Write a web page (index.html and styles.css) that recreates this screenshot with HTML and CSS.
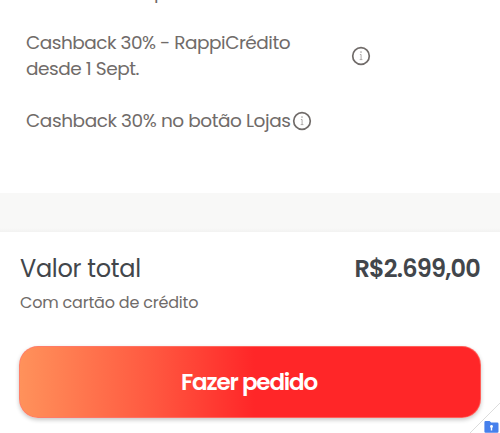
FILE: index.html
```html
<!DOCTYPE html>
<html lang="pt-BR">
<head>
    <meta charset="UTF-8">
    <meta name="viewport" content="width=device-width, initial-scale=1.0">
    <title>Fazer pedido</title>
    <link rel="stylesheet" href="styles.css">
</head>
<body>
<div class="checkout">
    <div class="benefits">
        <div class="benefit benefit-cut"><span>p</span></div>
        <div class="benefit benefit-wide">
            <div class="benefit-text">
                <div class="line-first">Cashback 30% - RappiCrédito</div>
                <div class="line-second">desde 1 Sept.</div>
            </div>
            <svg class="info" viewBox="0 0 20 20">
                <circle cx="10" cy="10" r="8.3" fill="none" stroke="#706b69" stroke-width="1.7"/>
                <path d="M8.9 8.5h1.2v5.2M8.7 13.6h2.7" fill="none" stroke="#a5a1a0" stroke-width="0.9"/>
                <circle cx="10" cy="6.1" r="0.8" fill="#a5a1a0"/>
            </svg>
        </div>
        <div class="benefit">
            <div class="benefit-text line-stores">Cashback 30% no botão Lojas</div>
            <svg class="info" viewBox="0 0 20 20">
                <circle cx="10" cy="10" r="8.3" fill="none" stroke="#706b69" stroke-width="1.7"/>
                <path d="M8.9 8.5h1.2v5.2M8.7 13.6h2.7" fill="none" stroke="#a5a1a0" stroke-width="0.9"/>
                <circle cx="10" cy="6.1" r="0.8" fill="#a5a1a0"/>
            </svg>
        </div>
    </div>

    <div class="divider"></div>

    <div class="summary">
        <div class="total">
            <span class="total-label">Valor total</span>
            <span class="total-value">R$2.699,00</span>
        </div>
        <div class="payment"><span>Com cartão de crédito</span></div>
        <button class="order-button"><span>Fazer pedido</span></button>
    </div>

    <svg class="corner" viewBox="0 0 30 30">
        <path d="M0 30L30 0V30Z" fill="#fff"/>
        <path d="M0 30L30 0" stroke="#dcdcdc" stroke-width="1"/>
        <path d="M15.6 18h4l1.5 1.5h6.2q1.2 0 1.2 1.2v8q0 1.1-1.2 1.1H15.6q-1.2 0-1.2-1.1v-9.5q0-1.2 1.2-1.2Z" fill="#4680ec"/>
        <circle cx="21.5" cy="23.5" r="1.4" fill="#fff"/>
        <path d="M21.5 23.5v4" stroke="#fff" stroke-width="1.4"/>
    </svg>
</div>
</body>
</html>
```
FILE: styles.css
```css
* { box-sizing: border-box; }
body {
    margin: 0;
    background-color: #fff;
    color: #706b69;
    font-family: Poppins, "Open Sans", sans-serif;
}
.checkout { position: relative; height: 433px; overflow: hidden; }

/* Cashback */
.benefits { height: 193px; padding-left: 26px; }
.benefit { display: flex; align-items: center; font-size: 18.5px; line-height: 26px; white-space: nowrap; }
.benefit-cut { height: 30px; align-items: flex-start; padding-left: 128px; line-height: 0; }
.benefit-cut span { margin-top: -8px; }
.benefit-wide { height: 52px; margin-bottom: 26px; }
.benefit-wide .benefit-text { width: 325px; }
.line-first { letter-spacing: -0.49px; }
.line-second { letter-spacing: -0.45px; }
.line-stores { width: 266px; letter-spacing: -0.43px; }
.info { width: 20px; height: 20px; flex: none; }

.divider { height: 39px; background: linear-gradient(#f8f8f7 0, #f8f8f7 35px, #f2f2f1 39px); }

/* Total */
.summary { padding: 20px 19px 0 20px; }
.total { display: flex; justify-content: space-between; height: 34px; line-height: 34px; color: #42464b; }
.total-label { font-size: 24px; letter-spacing: -0.3px; }
.total-value { margin-right: 1px; font-size: 24px; font-weight: 600; letter-spacing: -0.8px; }
.payment { height: 60px; padding-top: 5px; font-size: 16px; line-height: 24px; letter-spacing: -0.2px; }
.order-button {
    display: block;
    width: 462px;
    height: 72px;
    margin-left: -1px;
    padding: 0 2px 1px 0;
    border: 1px solid rgba(255,120,110,0.7);
    border-radius: 19px;
    background: linear-gradient(90deg, #ff925b 0, #ff5840 29%, #ff2628 51%) border-box;
    box-shadow: 0 2px 4px rgba(0,0,0,0.22);
    color: #fff;
    font-family: inherit;
    font-size: 23px;
    font-weight: 600;
    letter-spacing: -1.15px;
}

.corner { position: absolute; right: 0; bottom: 0; width: 30px; height: 30px; }
```
